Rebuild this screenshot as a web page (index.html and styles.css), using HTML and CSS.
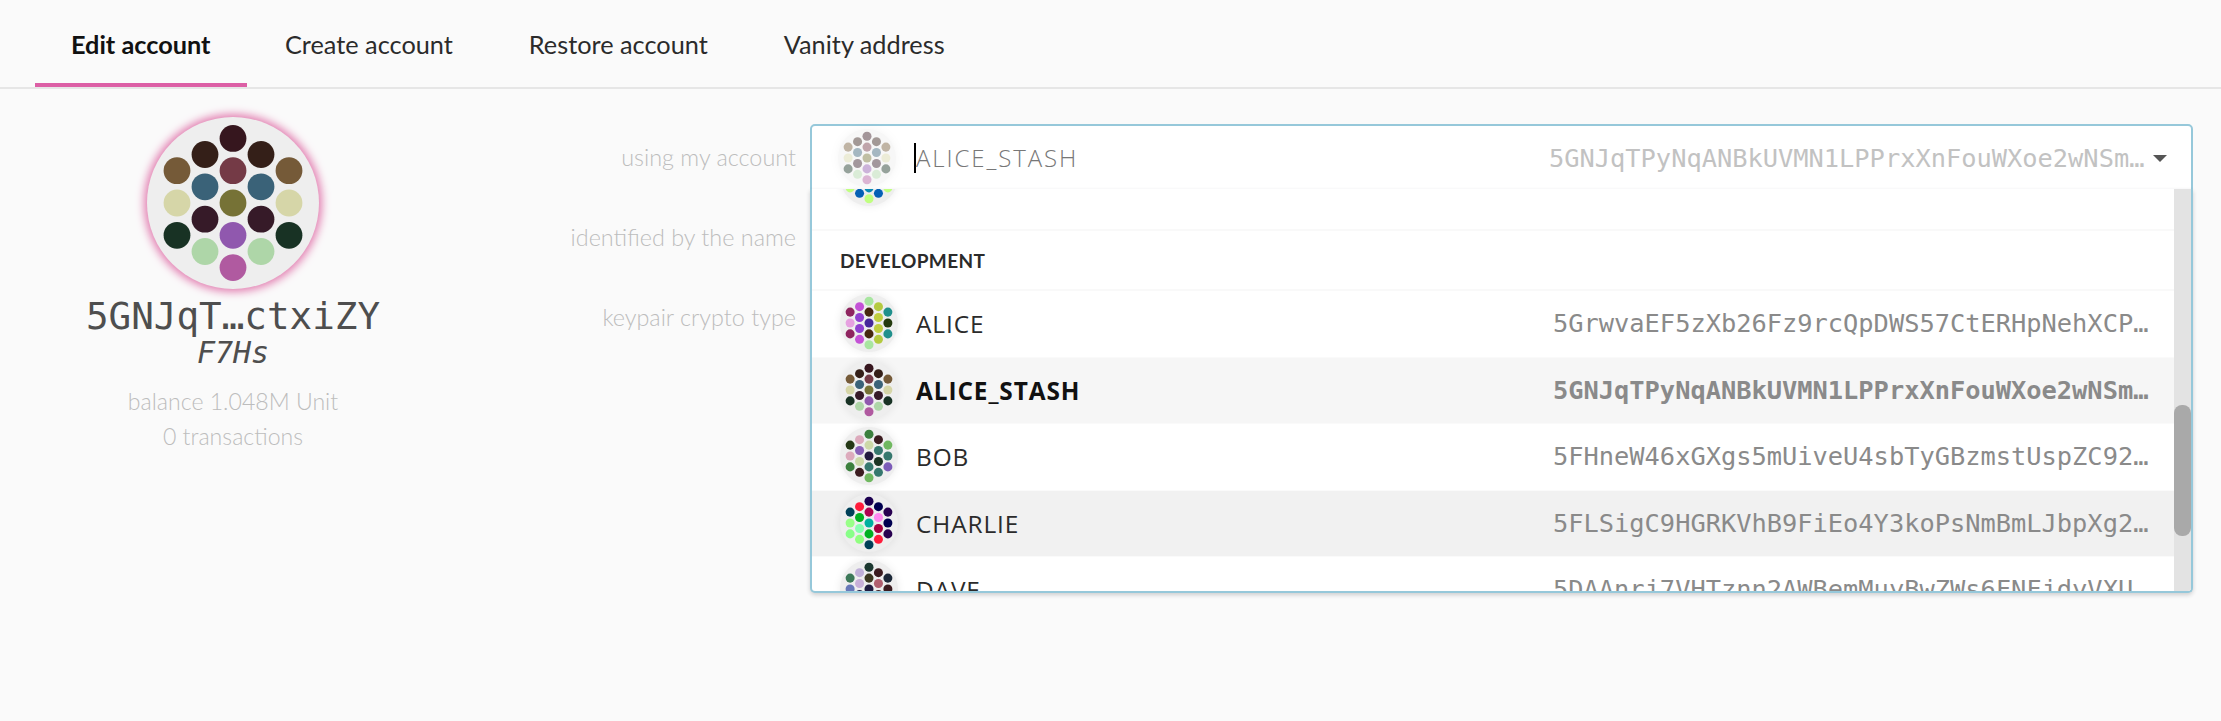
FILE: index.html
```html
<!DOCTYPE html>
<html>
  <head>
    <title>Accounts</title>
    <link rel="stylesheet" href="styles.css">
  </head>
  <body>
    <nav class="tabs">
      <a class="tab tab-active">Edit account</a>
      <a class="tab">Create account</a>
      <a class="tab">Restore account</a>
      <a class="tab">Vanity address</a>
    </nav>

    <main class="page">
      <section class="summary">
        <span class="identicon identicon-large" data-icon="stash"></span>
        <div class="summary-address">5GNJqT…ctxiZY</div>
        <div class="summary-name">F7Hs</div>
        <div class="summary-info summary-balance">balance 1.048M Unit</div>
        <div class="summary-info">0 transactions</div>
      </section>

      <form class="form">
        <div class="field">
          <label class="field-label">using my account</label>
          <div class="dropdown">
            <div class="dropdown-value">
              <span class="identicon identicon-faded" data-icon="stash"></span>
              <span class="cursor"></span>
              <span class="value-name">ALICE_STASH</span>
              <span class="address value-address">5GNJqTPyNqANBkUVMN1LPPrxXnFouWXoe2wNSmmEoLctxiZY</span>
              <span class="arrow"></span>
            </div>

            <div class="menu">
              <div class="menu-list">
                <div class="item item-cut">
                  <span class="identicon" data-icon="other"></span>
                </div>
                <div class="menu-header">DEVELOPMENT</div>
                <div class="item">
                  <span class="identicon" data-icon="alice"></span>
                  <span class="item-name">ALICE</span>
                  <span class="address">5GrwvaEF5zXb26Fz9rcQpDWS57CtERHpNehXCPcNoHGKutQY</span>
                </div>
                <div class="item item-selected">
                  <span class="identicon" data-icon="stash"></span>
                  <span class="item-name">ALICE_STASH</span>
                  <span class="address">5GNJqTPyNqANBkUVMN1LPPrxXnFouWXoe2wNSmmEoLctxiZY</span>
                </div>
                <div class="item">
                  <span class="identicon" data-icon="bob"></span>
                  <span class="item-name">BOB</span>
                  <span class="address">5FHneW46xGXgs5mUiveU4sbTyGBzmstUspZC92UhjJM694ty</span>
                </div>
                <div class="item item-hover">
                  <span class="identicon" data-icon="charlie"></span>
                  <span class="item-name">CHARLIE</span>
                  <span class="address">5FLSigC9HGRKVhB9FiEo4Y3koPsNmBmLJbpXg2mp1hXcS59Y</span>
                </div>
                <div class="item">
                  <span class="identicon" data-icon="dave"></span>
                  <span class="item-name">DAVE</span>
                  <span class="address">5DAAnrj7VHTznn2AWBemMuyBwZWs6FNFjdyVXUeYum3PTXFy</span>
                </div>
              </div>
              <div class="scrollbar"><div class="scrollbar-thumb"></div></div>
            </div>
          </div>
        </div>

        <div class="field">
          <label class="field-label">identified by the name</label>
        </div>
        <div class="field">
          <label class="field-label">keypair crypto type</label>
        </div>
      </form>
    </main>

    <script src="script.js"></script>
  </body>
</html>
```

FILE: styles.css
```css
body {
  margin: 0;
  min-height: 721px;
  background-color: #fafafa;
  font-family: Lato, "Open Sans", sans-serif;
}
.tabs {
  display: flex;
  gap: 4px;
  height: 87px;
  padding-left: 35px;
  border-bottom: 2px solid #e6e6e6;
}
.tab {
  box-sizing: border-box;
  height: 87px;
  padding: 27px 36px 0 36px;
  font-size: 25.3px;
  line-height: 34px;
  color: #2b2b2b;
  border-bottom: 4px solid transparent;
}
.tab-active {
  margin-right: -1.5px;
  font-weight: 700;
  color: #111;
  border-bottom-color: #dc5fa5;
}
.page {
  display: flex;
}
.summary {
  display: flex;
  flex-direction: column;
  align-items: center;
  width: 466px;
  padding-top: 28px;
}
.summary-address {
  margin-top: 5px;
  font-family: "DejaVu Sans Mono", monospace;
  font-size: 37.6px;
  line-height: 44px;
  color: #4e4e4e;
}
.summary-name {
  font-family: "DejaVu Sans Mono", monospace;
  font-style: italic;
  font-size: 30px;
  line-height: 30px;
  color: #4e4e4e;
}
.summary-info {
  font-size: 23.1px;
  font-weight: 300;
  line-height: 35px;
  color: #bdbdbd;
}
.summary-balance {
  margin-top: 16px;
}
.form {
  flex: 1;
  padding: 35px 28px 0 0;
}
.field {
  display: flex;
  gap: 14px;
  height: 66px;
  margin-bottom: 14px;
}
.field-label {
  width: 330px;
  font-size: 23.4px;
  font-weight: 300;
  line-height: 66px;
  text-align: right;
  color: #bdbdbd;
}
.dropdown {
  position: relative;
  flex: 1;
  box-sizing: border-box;
  height: 66px;
  background-color: #fff;
  border: 2px solid #96c8da;
  border-bottom: 1px solid #96c8da;
  border-radius: 5px 5px 0 0;
}
.dropdown-value {
  display: flex;
  align-items: center;
  height: 63px;
  padding-left: 26px;
}
.cursor {
  width: 2px;
  height: 30px;
  margin-left: 18px;
  background-color: #000;
}
.value-name {
  flex: 1;
  font-family: "Open Sans", sans-serif;
  font-size: 24px;
  font-weight: 300;
  letter-spacing: 1.9px;
  color: #777;
}
.address {
  flex: none;
  width: 597px;
  overflow: hidden;
  white-space: nowrap;
  text-overflow: ellipsis;
  font-family: "DejaVu Sans Mono", monospace;
  font-size: 25.36px;
  color: #8a8a8a;
}
.value-address {
  color: #c2c2c2;
}
.arrow {
  width: 0;
  height: 0;
  margin: 2px 24px 0 7px;
  border-left: 7px solid transparent;
  border-right: 7px solid transparent;
  border-top: 7px solid #555;
}
.menu {
  position: absolute;
  top: 100%;
  left: -2px;
  right: -2px;
  display: flex;
  height: 402px;
  overflow: hidden;
  background-color: #fff;
  border: 2px solid #96c8da;
  border-top: 0;
  border-radius: 0 0 5px 5px;
  box-shadow: 0 2px 4px rgba(34, 36, 38, 0.2);
}
.menu-list {
  flex: 1;
  min-width: 0;
}
.menu-header {
  box-sizing: border-box;
  height: 62px;
  padding-left: 28px;
  font-size: 19px;
  font-weight: 700;
  line-height: 60px;
  letter-spacing: 0.4px;
  color: #2b2b2b;
  border-top: 2px solid #f9f9f9;
  border-bottom: 2px solid #f9f9f9;
}
.item {
  display: flex;
  align-items: flex-start;
  box-sizing: border-box;
  height: 66.5px;
  padding: 3px 24px 0 28px;
  border-bottom: 1.5px solid #fafafa;
}
.item .identicon {
  flex: none;
}
.item-cut {
  height: 40px;
  padding-top: 0;
  border-bottom: 0;
  overflow: hidden;
}
.item-cut .identicon {
  margin-top: -41px;
}
.item-name {
  flex: 1;
  margin-left: 18px;
  font-family: "Open Sans", sans-serif;
  font-size: 24.4px;
  letter-spacing: 0.9px;
  line-height: 59px;
  color: #2b2b2b;
}
.item .address {
  line-height: 59px;
}
.item-selected {
  background-color: #f6f6f6;
}
.item-selected .item-name {
  font-weight: 700;
  color: #111;
}
.item-selected .address {
  font-weight: 700;
}
.item-hover {
  background-color: #f1f1f1;
}
.scrollbar {
  flex: none;
  width: 17px;
  background-color: #e3e3e3;
}
.scrollbar-thumb {
  height: 131px;
  margin-top: 216px;
  background-color: #a9a9a9;
  border-radius: 8px;
}
.identicon {
  display: block;
  width: 58px;
  height: 58px;
  border-radius: 50%;
  background-color: #eee;
  box-shadow: 0 0 8px rgba(0, 0, 0, 0.08);
}
.identicon svg {
  display: block;
  width: 100%;
  height: 100%;
}
.identicon-large {
  width: 172px;
  height: 172px;
  box-shadow: 0 0 8px 3px #e27db0;
}
.identicon-faded {
  flex: none;
  opacity: 0.45;
}
```

FILE: script.js
```js
// colours are listed column by column, left to right, top to bottom
const icons = {
  stash: ['#755a38', '#d6d6a8', '#183224', '#341f18', '#3a6278', '#361a28', '#aed6a8', '#36161e', '#743a46', '#767236', '#9058ae', '#b05aa0', '#341f18', '#3a6278', '#361a28', '#aed6a8', '#755a38', '#d6d6a8', '#183224'],
  other: ['#c0ff80', '#c0ff80', '#c0ff80', '#0560b5', '#0560b5', '#0560b5', '#0560b5', '#c0ff80', '#0a8bb5', '#0a8bb5', '#0a8bb5', '#c0ff80', '#0560b5', '#0560b5', '#0560b5', '#0560b5', '#c0ff80', '#c0ff80', '#c0ff80'],
  alice: ['#8f2560', '#e6a0e0', '#8f2560', '#c452d6', '#9040d0', '#9040d0', '#c452d6', '#a8e6a0', '#46280e', '#46289a', '#46280e', '#a8e6a0', '#b4ca40', '#c0ce40', '#c0ce40', '#b4ca40', '#20908c', '#243a0e', '#20908c'],
  bob: ['#243816', '#dcaabc', '#3c803e', '#dcaabc', '#8860b8', '#ccd8a8', '#3c1c20', '#3c803e', '#ccd8a8', '#221a40', '#36786e', '#70b860', '#3c1c20', '#36786e', '#1c3424', '#36786e', '#70b860', '#36786e', '#7c5cb8'],
  charlie: ['#004058', '#98ff88', '#88ff88', '#ff1c3c', '#00b020', '#88ffb0', '#90ff80', '#1c0050', '#b00050', '#00b0a0', '#00b020', '#004058', '#000050', '#ff88f0', '#a80040', '#ff1c3c', '#280050', '#000050', '#280050'],
  dave: ['#3c7858', '#6878b8', '#3c7858', '#c0b0d8', '#c8b0d8', '#201c40', '#c0b0d8', '#1c3830', '#3c3820', '#201c40', '#3c3820', '#1c3830', '#3c1c20', '#b06070', '#3c1c20', '#3c1c20', '#1c2838', '#3c1c20', '#1c2838']
};

// x offset and y offsets of each column, in a 172 wide box
const columns = [
  [-56, [-32.3, 0, 32.3]],
  [-28, [-48.5, -16.2, 16.2, 48.5]],
  [0, [-64.6, -32.3, 0, 32.3, 64.6]],
  [28, [-48.5, -16.2, 16.2, 48.5]],
  [56, [-32.3, 0, 32.3]]
];

document.querySelectorAll('.identicon').forEach((el) => {
  const colours = icons[el.dataset.icon];
  let circles = '';
  let i = 0;
  for (const [x, ys] of columns) {
    for (const y of ys) {
      circles += `<circle cx="${86 + x}" cy="${86 + y}" r="13.4" fill="${colours[i]}"/>`;
      i++;
    }
  }
  el.innerHTML = `<svg viewBox="0 0 172 172">${circles}</svg>`;
});
```
